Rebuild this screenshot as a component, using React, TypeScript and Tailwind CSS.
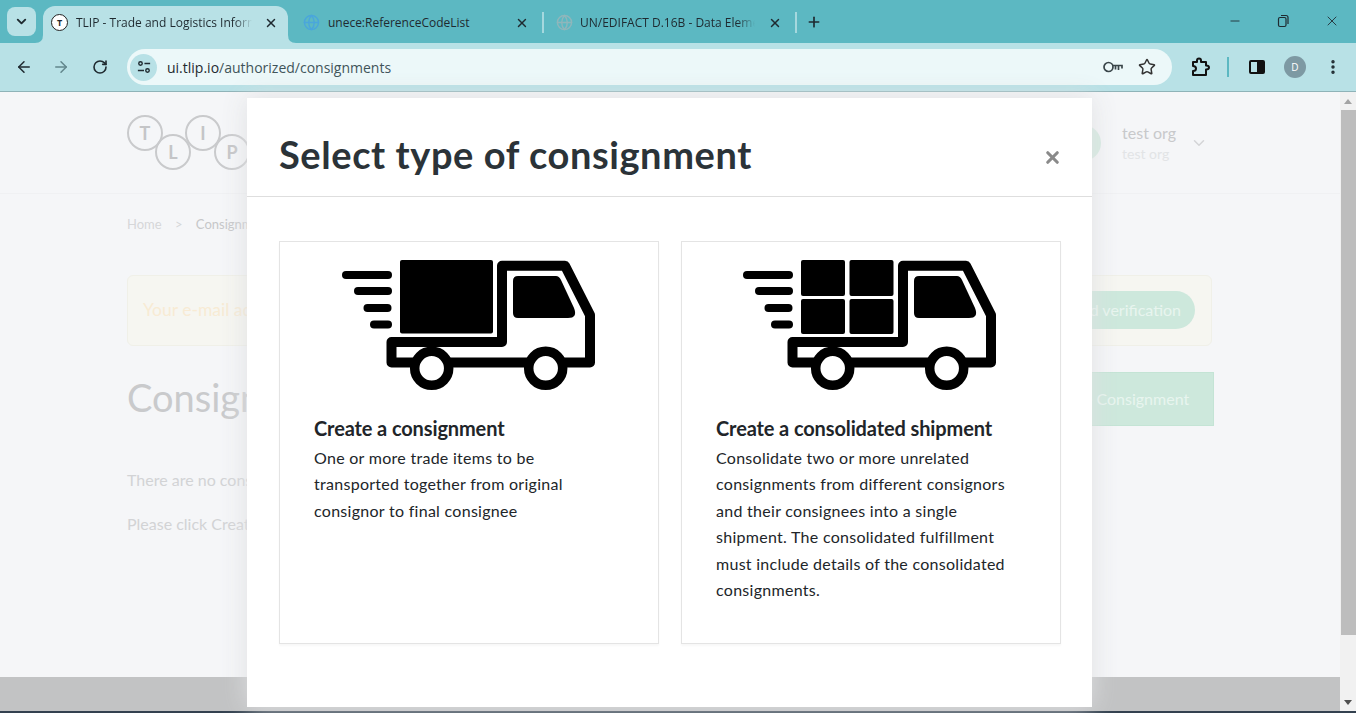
import { ArrowLeft, ArrowRight, ChevronDown, Globe, Minus, MoreVertical, Plus, RotateCw, Star, X } from "lucide-react";

const sans = "font-['Lato','Noto_Sans',sans-serif]";

function Truck({ boxes }: { boxes: [number, number, number, number][] }) {
  return (
    <svg viewBox="0 0 280 150" className="block h-[150px] w-[280px]">
      <rect x="12" y="21" width="50" height="8" rx="4" />
      <rect x="24" y="37" width="38" height="8" rx="4" />
      <rect x="33.5" y="54" width="28" height="8" rx="4" />
      <rect x="40" y="70.5" width="22" height="8" rx="4" />
      {boxes.map(([x, y, w, h]) => (
        <rect key={`${x}-${y}`} x={x} y={y} width={w} height={h} rx="2" />
      ))}
      <path
        d="M172 92 V15.7 H235 L260 65 V112.5 H61.5 V92 Z"
        fill="none"
        stroke="#000"
        strokeWidth="10"
        strokeLinejoin="round"
      />
      <path d="M188 26 H226 Q229 26 231 30 L244 58 Q248 68 238 68 H188 Q183 68 183 63 V31 Q183 26 188 26 Z" />
      <circle cx="101.7" cy="118.3" r="17" fill="#fff" stroke="#000" strokeWidth="9.5" />
      <circle cx="215.7" cy="118.3" r="17" fill="#fff" stroke="#000" strokeWidth="9.5" />
    </svg>
  );
}

function TlipLogo() {
  const letters = [
    { l: "T", cx: 19, cy: 20 },
    { l: "L", cx: 47, cy: 39 },
    { l: "I", cx: 77, cy: 20 },
    { l: "P", cx: 106, cy: 39 },
  ];
  return (
    <svg viewBox="0 0 130 60" className="h-[60px] w-[130px]">
      {letters.map((c) => (
        <g key={c.l}>
          <circle cx={c.cx} cy={c.cy} r="17" fill="none" stroke="#c9cacc" strokeWidth="2" />
          <text x={c.cx} y={c.cy + 6.5} textAnchor="middle" fontSize="18" fontWeight="700" fill="#c4c5c7" fontFamily="Lato, sans-serif">
            {c.l}
          </text>
        </g>
      ))}
    </svg>
  );
}

function Browser() {
  return (
    <div className="shrink-0 font-['Open_Sans','Noto_Sans',sans-serif]">
      <div className="flex h-[43px] items-end bg-[#5cb8c2] text-[#1f2a30]">
        <div className="mb-[7px] ml-[7px] flex h-[29px] w-[29px] items-center justify-center rounded-lg bg-[#b8e1e6]">
          <ChevronDown size={15} strokeWidth={3} />
        </div>
        <div className="relative ml-[7px] flex h-[37px] w-[245px] items-center rounded-t-xl bg-[#b8e1e6] pb-[4px] pl-[8px]">
          {/* flared feet of the active tab */}
          <svg viewBox="0 0 8 8" className="absolute bottom-0 left-[-8px] h-[8px] w-[8px]">
            <path d="M8 0 V8 H0 Q8 8 8 0 Z" fill="#b8e1e6" />
          </svg>
          <svg viewBox="0 0 8 8" className="absolute bottom-0 right-[-8px] h-[8px] w-[8px]">
            <path d="M0 0 V8 H8 Q0 8 0 0 Z" fill="#b8e1e6" />
          </svg>
          <span className="flex h-[17px] w-[17px] items-center justify-center rounded-full border-[1.5px] border-[#222] bg-white text-[9px] font-bold">T</span>
          <span className="ml-[8px] w-[176px] overflow-hidden whitespace-nowrap text-[12px] [mask-image:linear-gradient(to_right,black_90%,transparent)]">
            TLIP - Trade and Logistics Information
          </span>
          <X size={14} strokeWidth={2.5} className="ml-[12px]" />
        </div>
        <div className="mb-[2px] flex h-[37px] w-[256px] items-center pl-[15px]">
          <Globe size={17} className="text-[#4aa6dc]" />
          <span className="ml-[8px] w-[180px] whitespace-nowrap text-[12px]">unece:ReferenceCodeList</span>
          <X size={14} strokeWidth={2.5} className="ml-[8px]" />
          <span className="ml-[13px] h-[21px] w-[2px] bg-[#a5d8de]" />
        </div>
        <div className="mb-[2px] flex h-[37px] w-[253px] items-center pl-[12px]">
          <Globe size={17} className="text-[#8fb6bb]" />
          <span className="ml-[7px] w-[175px] overflow-hidden whitespace-nowrap text-[12px] [mask-image:linear-gradient(to_right,black_90%,transparent)]">
            UN/EDIFACT D.16B - Data Element
          </span>
          <X size={14} strokeWidth={2.5} className="ml-[13px]" />
          <span className="ml-[13px] h-[21px] w-[2px] bg-[#a5d8de]" />
        </div>
        <Plus size={16} strokeWidth={2.5} className="mb-[13px] ml-[9px]" />
        <div className="mb-[14px] ml-auto flex items-center pr-[16px]">
          <Minus size={14} strokeWidth={1.5} />
          <svg viewBox="0 0 14 14" className="ml-[34px] h-[14px] w-[14px]" fill="none" stroke="#1f2a30" strokeWidth="1.2">
            <rect x="2.5" y="3.5" width="7.5" height="9" rx="1.5" />
            <path d="M5 1.5 H10 Q12 1.5 12 3.5 V10" />
          </svg>
          <X size={16} strokeWidth={1.3} className="ml-[34px]" />
        </div>
      </div>
      <div className="flex h-[49px] items-center border-b border-[#8fb3b8] bg-[#b8e1e6] text-[#1f2a30]">
        <ArrowLeft size={18} strokeWidth={2} className="ml-[15px]" />
        <ArrowRight size={18} strokeWidth={2} className="ml-[19px] text-[#62868c]" />
        <RotateCw size={16} strokeWidth={2.4} className="ml-[22px]" />
        <div className="ml-[19px] flex h-[36px] w-[1045px] items-center rounded-full bg-[#ecf8f9] pl-[3px] pr-[16px]">
          <span className="flex h-[27px] w-[27px] items-center justify-center rounded-full bg-[#b8e1e6]">
            <svg viewBox="0 0 16 16" className="h-[14px] w-[14px]" fill="none" stroke="#1f2a30" strokeWidth="1.6">
              <circle cx="4" cy="4" r="2" />
              <path d="M8.5 4 H15 M1 12 H8" />
              <circle cx="12" cy="12" r="2" />
            </svg>
          </span>
          <span className="ml-[10px] text-[14px] text-[#3f5459]">
            <span className="text-[#1f2a30]">ui.tlip.io</span>/authorized/consignments
          </span>
          <svg viewBox="0 0 20 14" className="ml-auto h-[14px] w-[20px]" fill="none" stroke="#3a464a" strokeWidth="1.7">
            <circle cx="5.5" cy="7" r="4.5" />
            <path d="M10 5.5 H19 V8.5 M15.5 5.5 V10 M12.5 5.5 V9.5" />
          </svg>
          <Star size={18} strokeWidth={2} className="ml-[15px] text-[#333]" />
        </div>
        <svg viewBox="0 0 20 20" className="ml-[18px] h-[20px] w-[20px]" fill="none" stroke="#111" strokeWidth="2" strokeLinejoin="round">
          <path d="M3 5 H7 V3.5 Q7 1.5 9 1.5 Q11 1.5 11 3.5 V5 H16 V8.5 Q19 8.5 19 10.5 Q19 12.5 16 12.5 V18 H3 V14 Q6 14 6 11.5 Q6 9 3 9 Z" />
        </svg>
        <span className="ml-[17px] h-[20px] w-[2px] bg-[#5cb8c2]" />
        <span className="ml-[20px] flex h-[14px] w-[16px] rounded-[2px] border-2 border-[#111]">
          <span className="ml-auto w-[6px] bg-[#111]" />
        </span>
        <span className="ml-[19px] flex h-[22px] w-[22px] items-center justify-center rounded-full bg-[#7d99a3] text-[10px] text-white">D</span>
        <MoreVertical size={18} strokeWidth={2.6} className="ml-[18px]" />
      </div>
    </div>
  );
}

function PageBehind() {
  return (
    <div className={`flex min-w-0 flex-1 flex-col bg-[#f5f6f8] ${sans}`}>
      <header className="flex h-[102px] shrink-0 items-center border-b border-[#f0f1f3] pl-[126px] pr-[132px]">
        <div className="mt-[1px]">
          <TlipLogo />
        </div>
        <div className="ml-auto h-[36px] w-[36px] rounded-full bg-[#d5ebe1]" />
        <div className="ml-[21px] leading-none">
          <p className="text-[16px] text-[#c8c9cb]">test org</p>
          <p className="mt-[6px] text-[14px] text-[#e2e4e6]">test org</p>
        </div>
        <ChevronDown size={18} className="ml-[14px] text-[#d4d5d7]" />
      </header>
      <div className="flex min-h-0 flex-1 flex-col px-[127px] pr-[126px]">
        <p className="mt-[21px] text-[13px] text-[#d6d7d9]">
          Home <span className="mx-[10px]">&gt;</span> <span className="text-[#c6c7c9]">Consignments</span>
        </p>
        <div className="mt-[40px] flex h-[71px] w-[1085px] items-center justify-between rounded-md border border-[#f0f0e8] bg-[#f6f6f1] pl-[15px] pr-[16px]">
          <span className="text-[17.5px] text-[#f8ebd4]">Your e-mail address is not verified</span>
          <span className="rounded-full bg-[#cde8dc] px-[14px] py-[7px] text-[16px] text-[#e8f5ef]">Send verification</span>
        </div>
        <div className="mt-[26px] flex w-[1087px] items-center justify-between">
          <h1 className="mb-[4px] text-[38px] leading-none text-[#c9cacc]">Consignments</h1>
          <span className="flex h-[54px] w-[300px] items-center justify-center border border-[#c4e4d5] bg-[#cde8dc] pl-[107px] text-[16px] text-[#e8f5ef]">
            Create Consignment
          </span>
        </div>
        <p className="mt-[42px] text-[16px] text-[#d2d3d5]">There are no consignments yet.</p>
        <p className="mt-[20px] text-[16px] text-[#d2d3d5]">Please click Create Consignment to add one.</p>
      </div>
      <div className="h-[34px] shrink-0 bg-[#c2c3c4]" />
    </div>
  );
}

function TypeCard({ title, children, boxes, shift }: { title: string; children: string; boxes: [number, number, number, number][]; shift: string }) {
  return (
    <div className="h-[403px] w-[380px] border border-[#e4e4e4] shadow-[0_2px_2px_rgba(0,0,0,0.03)]">
      <div className={`mt-[8px] ${shift}`}>
        <Truck boxes={boxes} />
      </div>
      <div className="mt-[15px] w-[334px] pl-[34px] text-[16px] leading-[26.4px] text-[#212529]">
        <h3 className="text-[20px] font-bold leading-[26px] tracking-[-0.12px]">{title}</h3>
        <p className="mt-[4px] tracking-[0.28px]">{children}</p>
      </div>
    </div>
  );
}

function Modal() {
  return (
    <div className={`absolute left-[247px] top-[6px] h-[609px] w-[845px] bg-white shadow-[0_0_24px_rgba(222,223,226,0.95)] ${sans}`}>
      <div className="flex h-[99px] items-center justify-between border-b border-[#dedede] pl-[32px] pr-[30px] pt-[14px]">
        <h2 className="text-[38px] font-bold leading-none tracking-[0.58px] text-[#2b3338]">Select type of consignment</h2>
        <X size={19} strokeWidth={4} className="mt-[7px] text-[#8a8a8a]" />
      </div>
      <div className="mt-[44px] flex gap-[22px] pl-[32px]">
        <TypeCard title="Create a consignment" shift="ml-[50px]" boxes={[[70, 10, 93, 73.5]]}>
          One or more trade items to be transported together from original consignor to final consignee
        </TypeCard>
        <TypeCard
          title="Create a consolidated shipment"
          shift="ml-[49px]"
          boxes={[
            [70, 10, 44, 36],
            [118.5, 10, 44, 36],
            [70, 49, 44, 35],
            [118.5, 49, 44, 35],
          ]}
        >
          Consolidate two or more unrelated consignments from different consignors and their consignees into a single shipment. The consolidated fulfillment must include details of the consolidated consignments.
        </TypeCard>
      </div>
    </div>
  );
}

function Scrollbar() {
  return (
    <div className="flex w-[16px] shrink-0 flex-col items-center bg-[#f1f1f1]">
      <div className="mt-[7px] h-0 w-0 border-x-[4px] border-b-[5px] border-x-transparent border-b-[#a3a3a3]" />
      <div className="mt-[6px] h-[525px] w-[15px] bg-[#bdbdbd]" />
      <div className="mt-auto mb-[6px] h-0 w-0 border-x-[4px] border-t-[5px] border-x-transparent border-t-[#505050]" />
    </div>
  );
}

export default function App() {
  return (
    <div className="flex h-[713px] w-[1356px] flex-col overflow-hidden">
      <Browser />
      <div className="relative flex min-h-0 flex-1">
        <PageBehind />
        <Scrollbar />
        <Modal />
      </div>
      <div className="h-[2px] shrink-0 bg-[#33414f]" />
    </div>
  );
}
